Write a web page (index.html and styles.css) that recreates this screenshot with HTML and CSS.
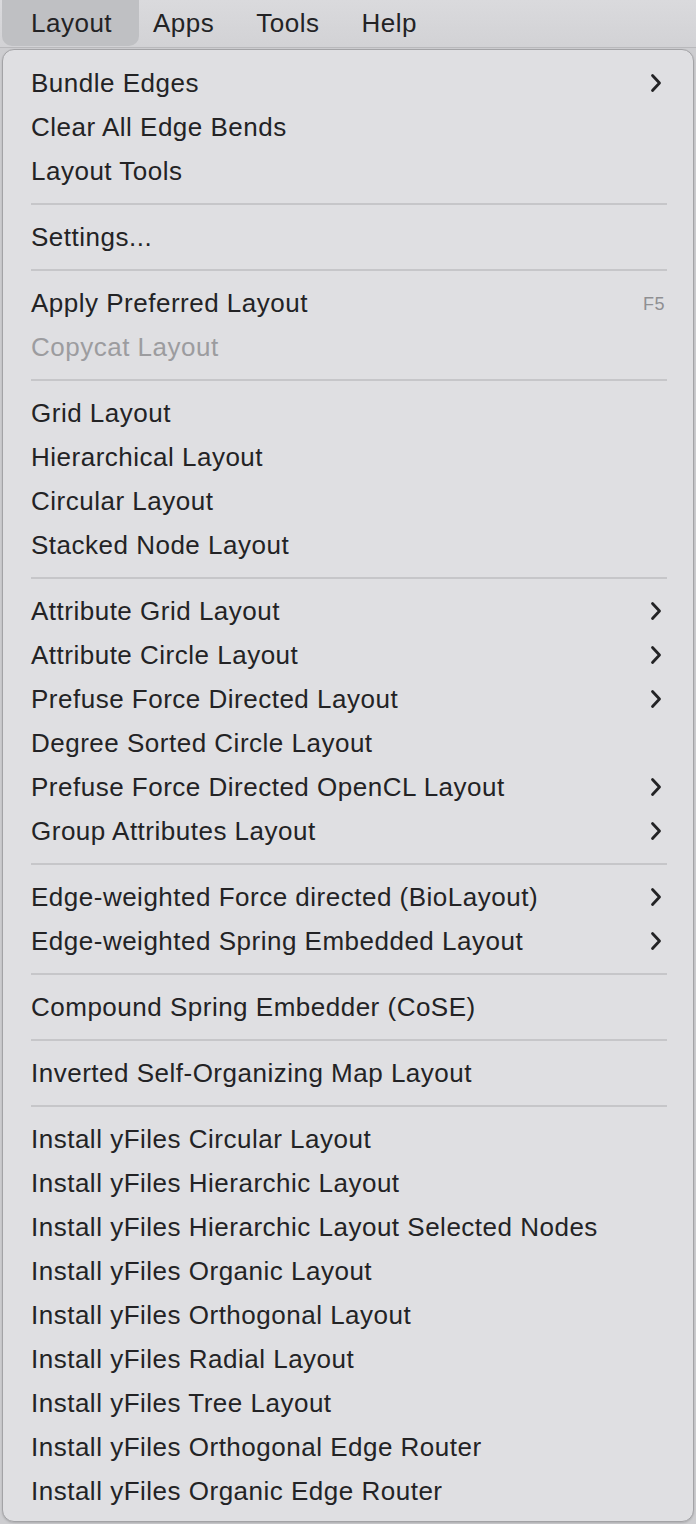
FILE: index.html
```html
<!DOCTYPE html>
<html>
<head>
<meta charset="utf-8">
<link rel="stylesheet" href="styles.css">
</head>
<body>
<div class="menubar">
  <div class="mb-item mb-active">Layout</div>
  <div class="mb-item mb-apps">Apps</div>
  <div class="mb-item mb-tools">Tools</div>
  <div class="mb-item mb-help">Help</div>
</div>
<div class="menu">
  <div class="item"><span>Bundle Edges</span><svg class="chev" viewBox="0 0 12 20"><path d="M2.5 2.5 L9.5 10 L2.5 17.5"/></svg></div>
  <div class="item"><span>Clear All Edge Bends</span></div>
  <div class="item"><span>Layout Tools</span></div>
  <div class="sep"></div>
  <div class="item"><span>Settings...</span></div>
  <div class="sep"></div>
  <div class="item"><span>Apply Preferred Layout</span><span class="key">F5</span></div>
  <div class="item disabled"><span>Copycat Layout</span></div>
  <div class="sep"></div>
  <div class="item"><span>Grid Layout</span></div>
  <div class="item"><span>Hierarchical Layout</span></div>
  <div class="item"><span>Circular Layout</span></div>
  <div class="item"><span>Stacked Node Layout</span></div>
  <div class="sep"></div>
  <div class="item"><span>Attribute Grid Layout</span><svg class="chev" viewBox="0 0 12 20"><path d="M2.5 2.5 L9.5 10 L2.5 17.5"/></svg></div>
  <div class="item"><span>Attribute Circle Layout</span><svg class="chev" viewBox="0 0 12 20"><path d="M2.5 2.5 L9.5 10 L2.5 17.5"/></svg></div>
  <div class="item"><span>Prefuse Force Directed Layout</span><svg class="chev" viewBox="0 0 12 20"><path d="M2.5 2.5 L9.5 10 L2.5 17.5"/></svg></div>
  <div class="item"><span>Degree Sorted Circle Layout</span></div>
  <div class="item"><span>Prefuse Force Directed OpenCL Layout</span><svg class="chev" viewBox="0 0 12 20"><path d="M2.5 2.5 L9.5 10 L2.5 17.5"/></svg></div>
  <div class="item"><span>Group Attributes Layout</span><svg class="chev" viewBox="0 0 12 20"><path d="M2.5 2.5 L9.5 10 L2.5 17.5"/></svg></div>
  <div class="sep"></div>
  <div class="item"><span>Edge-weighted Force directed (BioLayout)</span><svg class="chev" viewBox="0 0 12 20"><path d="M2.5 2.5 L9.5 10 L2.5 17.5"/></svg></div>
  <div class="item"><span>Edge-weighted Spring Embedded Layout</span><svg class="chev" viewBox="0 0 12 20"><path d="M2.5 2.5 L9.5 10 L2.5 17.5"/></svg></div>
  <div class="sep"></div>
  <div class="item"><span>Compound Spring Embedder (CoSE)</span></div>
  <div class="sep"></div>
  <div class="item"><span>Inverted Self-Organizing Map Layout</span></div>
  <div class="sep"></div>
  <div class="item"><span>Install yFiles Circular Layout</span></div>
  <div class="item"><span>Install yFiles Hierarchic Layout</span></div>
  <div class="item"><span>Install yFiles Hierarchic Layout Selected Nodes</span></div>
  <div class="item"><span>Install yFiles Organic Layout</span></div>
  <div class="item"><span>Install yFiles Orthogonal Layout</span></div>
  <div class="item"><span>Install yFiles Radial Layout</span></div>
  <div class="item"><span>Install yFiles Tree Layout</span></div>
  <div class="item"><span>Install yFiles Orthogonal Edge Router</span></div>
  <div class="item"><span>Install yFiles Organic Edge Router</span></div>
</div>
</body>
</html>
```

FILE: styles.css
```css
html, body {
  margin: 0;
  padding: 0;
}
body {
  width: 696px;
  height: 1524px;
  overflow: hidden;
  background: #cdcdd0;
  font-family: "Liberation Sans", Arial, sans-serif;
  color: #232325;
}
.menubar {
  height: 48px;
  display: flex;
  align-items: stretch;
  background: linear-gradient(#dadadd, #d2d2d5);
  border-bottom: 1px solid #b9b9bc;
  box-sizing: border-box;
  padding-left: 2px;
}
.mb-item {
  display: flex;
  align-items: center;
  font-size: 26px;
  letter-spacing: 0.5px;
}
.mb-active {
  width: 137px;
  box-sizing: border-box;
  padding-left: 29px;
  background: #bfc0c3;
  border-radius: 0 0 10px 10px;
  margin-bottom: 1px;
}
.mb-apps { margin-left: 14px; }
.mb-tools { margin-left: 42px; }
.mb-help { margin-left: 42px; }
.menu {
  margin: 1px 2px 0 2px;
  height: 1473px;
  box-sizing: border-box;
  background: #dfdfe2;
  border: 1px solid #a3a3a6;
  border-radius: 12px;
  padding: 11px 0 8px 0;
  box-shadow: 0 1px 2px rgba(0,0,0,0.15);
}
.item {
  height: 44px;
  display: flex;
  align-items: center;
  justify-content: space-between;
  padding: 0 28px 0 28px;
  font-size: 26px;
  letter-spacing: 0.5px;
  padding-top: 1px;
  box-sizing: border-box;
}
.item.disabled {
  color: #9c9c9f;
}
.key {
  font-size: 18px;
  color: #8f8f92;
  letter-spacing: 0.5px;
  padding-top: 2px;
}
.chev {
  width: 12px;
  height: 20px;
  margin-right: 3px;
  margin-top: -1px;
  fill: none;
  stroke: #232325;
  stroke-width: 2.8;
  stroke-linecap: round;
  stroke-linejoin: round;
}
.sep {
  height: 2px;
  margin: 10px 26px 10px 28px;
  background: #c6c6c9;
}
```
